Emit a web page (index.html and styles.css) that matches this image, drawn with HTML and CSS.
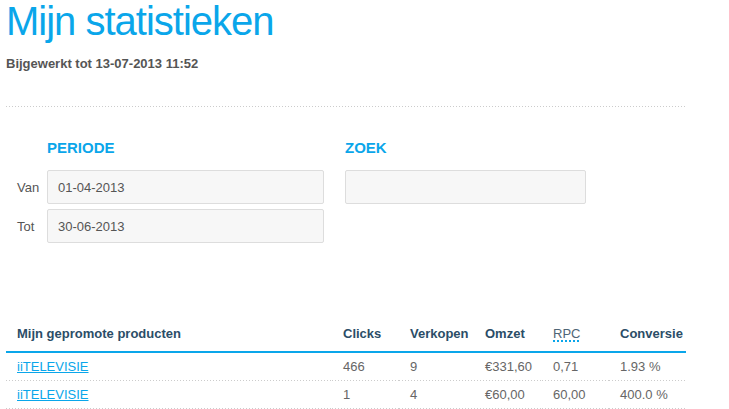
FILE: index.html
```html
<!DOCTYPE html>
<html lang="nl">
<head>
  <meta charset="UTF-8">
  <title>Mijn statistieken</title>
  <link rel="stylesheet" href="styles.css">
</head>
<body>

<h1>Mijn statistieken</h1>
<p class="updated">Bijgewerkt tot 13-07-2013 11:52</p>

<div class="divider"></div>

<div class="filters">
  <div class="period">
    <h3>PERIODE</h3>
    <label for="from">Van</label>
    <input id="from" type="text" value="01-04-2013">
    <label for="to">Tot</label>
    <input id="to" type="text" value="30-06-2013">
  </div>
  <div class="search">
    <h3>ZOEK</h3>
    <input id="q" type="text">
  </div>
</div>

<table class="stats">
  <colgroup>
    <col class="c-name">
    <col class="c-clicks">
    <col class="c-sales">
    <col class="c-turnover">
    <col class="c-rpc">
    <col class="c-conv">
  </colgroup>
  <thead>
  <tr>
    <th>Mijn gepromote producten</th>
    <th>Clicks</th>
    <th>Verkopen</th>
    <th>Omzet</th>
    <th><abbr title="Revenue per click">RPC</abbr></th>
    <th>Conversie</th>
  </tr>
  </thead>
  <tbody>
  <tr>
    <td><a href="#">iiTELEVISIE</a></td>
    <td>466</td>
    <td>9</td>
    <td>&euro;331,60</td>
    <td>0,71</td>
    <td>1.93 %</td>
  </tr>
  <tr>
    <td><a href="#">iiTELEVISIE</a></td>
    <td>1</td>
    <td>4</td>
    <td>&euro;60,00</td>
    <td>60,00</td>
    <td>400.0 %</td>
  </tr>
  </tbody>
</table>

</body>
</html>
```

FILE: styles.css
```css
body {
  margin: 0;
  padding: 0 6px;
  font-family: "Liberation Sans", Arial, sans-serif;
  font-size: 13px;
  color: #555;
  background: #fff;
}
h1 {
  margin: -2px 0 0;
  font-size: 40px;
  line-height: 46px;
  font-weight: normal;
  letter-spacing: -1px;
  color: #0aa6ea;
}
.updated {
  margin: 12px 0 0;
  font-weight: bold;
  line-height: 16px;
  color: #555;
}
.divider {
  width: 680px;
  height: 1px;
  margin-top: 34px;
  background: linear-gradient(to right, #ccc 1px, transparent 1px) repeat-x;
  background-size: 3px 1px;
}
.filters {
  display: flex;
  padding-left: 11px;
  margin-top: 32px;
}
.period {
  display: grid;
  grid-template-columns: 30px 277px;
  row-gap: 5px;
  align-items: center;
}
.period h3 {
  grid-column: 2;
  margin-bottom: 8px;
}
h3 {
  margin: 0 0 13px;
  font-size: 15px;
  line-height: 18px;
  color: #0aa6ea;
}
.search {
  margin-left: 21px;
}
.search input {
  width: 241px;
}
label {
  color: #555;
}
input {
  box-sizing: border-box;
  height: 34px;
  width: 277px;
  padding: 0 10px;
  border: 1px solid #ddd;
  border-radius: 2px;
  background: #f7f7f7;
  font-family: inherit;
  font-size: 13px;
  color: #555;
}
.stats {
  width: 680px;
  margin-top: 75px;
  border-collapse: collapse;
  table-layout: fixed;
}
.c-name { width: 326px; }
.c-clicks { width: 67px; }
.c-sales { width: 75px; }
.c-turnover { width: 68px; }
.c-rpc { width: 67px; }
.c-conv { width: 77px; }
th, td {
  padding: 6px 11px;
  line-height: 16px;
  text-align: left;
  white-space: nowrap;
}
th {
  padding: 8px 11px 9px;
  color: #2b4d67;
  border-bottom: 2px solid #0aa6ea;
}
th abbr {
  font-weight: normal;
  color: #4f6576;
  text-decoration: none;
  padding-bottom: 1px;
  background: linear-gradient(to right, #0aa6ea 2px, transparent 2px) repeat-x left bottom;
  background-size: 4px 2px;
}
td {
  color: #666;
  background: linear-gradient(to right, #ccc 1px, transparent 1px) repeat-x left bottom;
  background-size: 3px 1px;
}
td a {
  color: #0aa6ea;
}
```
